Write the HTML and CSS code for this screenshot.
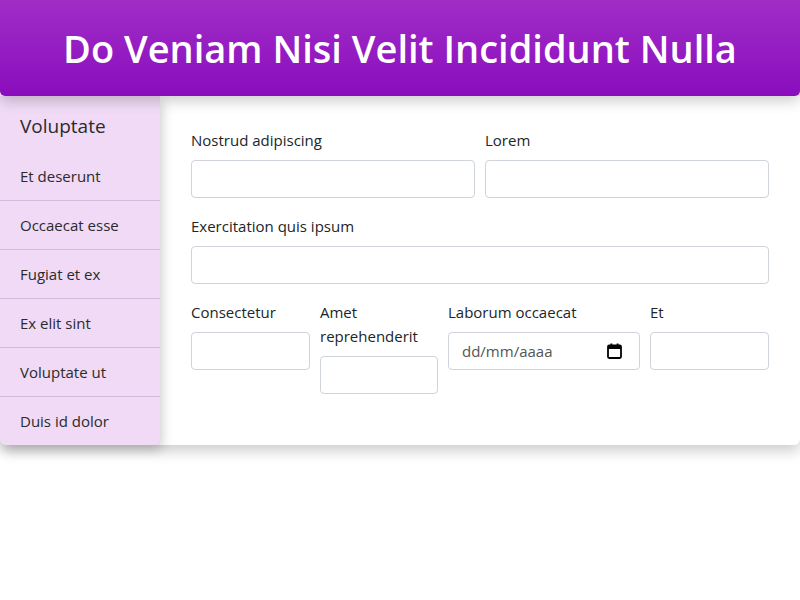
FILE: index.html
```html
<!DOCTYPE html>
<html lang="es">
<head>
<meta charset="utf-8">
<link rel="stylesheet" href="styles.css">
</head>
<body>
<header class="top">
  <h1 class="title">Do Veniam Nisi Velit Incididunt Nulla</h1>
</header>
<div class="card">
  <nav class="side">
    <div class="side-head">Voluptate</div>
    <div class="side-item">Et deserunt</div>
    <div class="side-item">Occaecat esse</div>
    <div class="side-item">Fugiat et ex</div>
    <div class="side-item">Ex elit sint</div>
    <div class="side-item">Voluptate ut</div>
    <div class="side-item">Duis id dolor</div>
  </nav>
  <main class="main">
    <div class="row row-2">
      <div class="field"><label class="lbl">Nostrud adipiscing</label><input class="inp" type="text"></div>
      <div class="field"><label class="lbl">Lorem</label><input class="inp" type="text"></div>
    </div>
    <div class="row">
      <div class="field"><label class="lbl">Exercitation quis ipsum</label><input class="inp" type="text"></div>
    </div>
    <div class="row row-4">
      <div class="field"><label class="lbl">Consectetur</label><input class="inp" type="text"></div>
      <div class="field"><label class="lbl">Amet reprehenderit</label><input class="inp" type="text"></div>
      <div class="field"><label class="lbl">Laborum occaecat</label>
        <div class="inp date"><span class="date-ph">dd/mm/aaaa</span>
          <svg class="cal" width="15" height="16" viewBox="0 0 15 16"><rect x="1" y="2.5" width="13" height="12.5" rx="1.2" fill="none" stroke="#000" stroke-width="1.8"/><rect x="1" y="2.5" width="13" height="3.5" fill="#000"/><rect x="3.5" y="0.5" width="1.8" height="3" fill="#000"/><rect x="9.7" y="0.5" width="1.8" height="3" fill="#000"/></svg>
        </div>
      </div>
      <div class="field"><label class="lbl">Et</label><input class="inp" type="text"></div>
    </div>
  </main>
</div>
</body>
</html>
```
FILE: styles.css
```css
* { box-sizing: border-box; }
html, body { min-height: 100%; }
body {
  margin: 0;
  min-height: 600px;
  font-family: "Open Sans", "Noto Sans", sans-serif;
  color: #212529;
  background: #fff;
}
.top {
  position: relative;
  z-index: 2;
  background: linear-gradient(#a12dc7, #8a0dbd);
  border-radius: 0 0 5px 5px;
  padding: 24px 0;
  box-shadow: 0 5px 14px rgba(0,0,0,0.2);
}
.title {
  margin: 0;
  text-align: center;
  color: #fff;
  font-size: 38px;
  line-height: 48px;
  font-weight: 600;
}
.card {
  position: relative;
  display: flex;
  border-radius: 0 0 6px 6px;
  box-shadow: 0 6px 14px rgba(0,0,0,0.2);
  background: #fff;
}
.side {
  position: relative;
  z-index: 1;
  width: 160px;
  flex: none;
  background: #f0daf5;
  border-radius: 0 0 6px 6px;
  box-shadow: 2px 5px 12px rgba(0,0,0,0.2);
  color: #2b2b2b;
}
.side-head {
  font-size: 19px;
  line-height: 30px;
  padding: 15px 20px 11px;
}
.side-item {
  font-size: 15px;
  line-height: 24px;
  padding: 12px 20px;
}
.side-item + .side-item { border-top: 1px solid #d3bcd9; }
.main {
  flex: 1;
  padding: 32px 31px;
  display: flex;
  flex-direction: column;
  gap: 16px;
}
.row { display: grid; gap: 10px; }
.row-2 { grid-template-columns: 1fr 1fr; }
.row-4 { grid-template-columns: 119px 118px 192px 119px; }
.field { display: flex; flex-direction: column; }
.lbl {
  font-size: 15px;
  line-height: 24px;
  margin-bottom: 8px;
}
.inp {
  height: 38px;
  width: 100%;
  border: 1px solid #ced4da;
  border-radius: 4px;
  background: #fff;
  font: inherit;
}
.date {
  display: flex;
  align-items: center;
  justify-content: space-between;
  padding: 0 17px 0 13px;
}
.date-ph { font-size: 15px; color: #555; }
.cal { display: block; }
```
